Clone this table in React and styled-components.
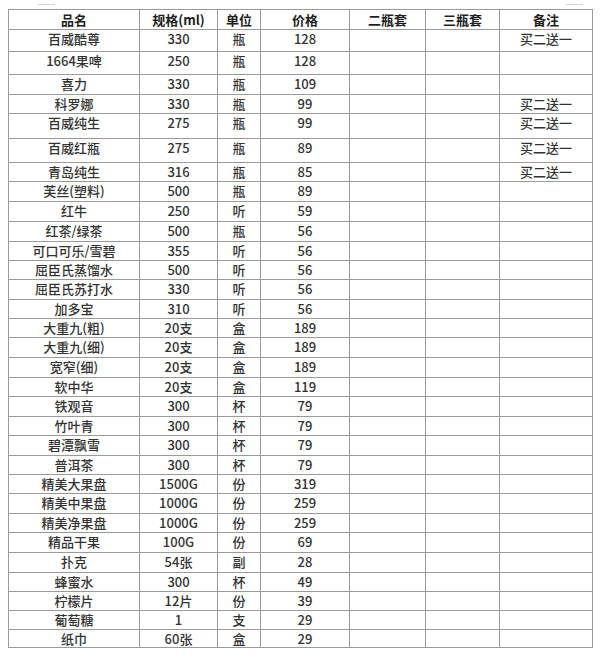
import React from "react";
import styled, { createGlobalStyle } from "styled-components";

const Global = createGlobalStyle`
  html, body { margin: 0; padding: 0; background: #ffffff; }
  body { font-family: "Noto Sans CJK SC", "Noto Sans", sans-serif; color: #2e2e2e; }
`;

const Page = styled.div`
  width: 600px;
  height: 658px;
  background: #fff;
  padding: 0 0 0 8px;
  box-sizing: border-box;
  overflow: hidden;
`;

const TopMarks = styled.div`
  height: 9px;
  display: flex;
  justify-content: space-between;
  align-items: flex-start;
  padding: 4px 17px 0 30px;
  box-sizing: border-box;
  width: 592px;
`;

const Mark = styled.span`
  display: block;
  width: 17px;
  height: 1px;
  background: #d4d4d4;
`;

const Table = styled.table`
  border-collapse: collapse;
  table-layout: fixed;
  width: 585px;
  font-size: 13px;
  border: 1px solid #8f8f8f;
`;

const Row = styled.tr`
  height: ${(p) => p.$h}px;
`;

const HeadCell = styled.th`
  border: 1px solid #9a9a9a;
  padding: 0;
  font-weight: 700;
  text-align: center;
  vertical-align: middle;
  line-height: 16px;
  height: ${(p) => p.$h - 1}px;
  color: #1e1e1e;
`;

const Cell = styled.td`
  border: 1px solid #9a9a9a;
  padding: 1px 0 0;
  text-align: center;
  vertical-align: top;
  line-height: 16px;
  font-weight: 500;
  height: ${(p) => p.$h - 2}px;
  color: #333;
  white-space: nowrap;
  box-sizing: border-box;
`;

const widths = [131, 78, 43, 89, 76, 74, 93];
const headers = ["品名", "规格(ml)", "单位", "价格", "二瓶套", "三瓶套", "备注"];

const rows = [
  ["百威酷尊", "330", "瓶", "128", "买二送一", 22],
  ["1664果啤", "250", "瓶", "128", "", 23],
  ["喜力", "330", "瓶", "109", "", 20],
  ["科罗娜", "330", "瓶", "99", "买二送一", 19],
  ["百威纯生", "275", "瓶", "99", "买二送一", 25],
  ["百威红瓶", "275", "瓶", "89", "买二送一", 24],
  ["青岛纯生", "316", "瓶", "85", "买二送一", 19],
  ["芙丝(塑料)", "500", "瓶", "89", "", 20],
  ["红牛", "250", "听", "59", "", 20],
  ["红茶/绿茶", "500", "瓶", "56", "", 20],
  ["可口可乐/雪碧", "355", "听", "56", "", 19],
  ["屈臣氏蒸馏水", "500", "听", "56", "", 19],
  ["屈臣氏苏打水", "330", "听", "56", "", 20],
  ["加多宝", "310", "听", "56", "", 19],
  ["大重九(粗)", "20支", "盒", "189", "", 19],
  ["大重九(细)", "20支", "盒", "189", "", 20],
  ["宽窄(细)", "20支", "盒", "189", "", 20],
  ["软中华", "20支", "盒", "119", "", 19],
  ["铁观音", "300", "杯", "79", "", 20],
  ["竹叶青", "300", "杯", "79", "", 19],
  ["碧潭飘雪", "300", "杯", "79", "", 20],
  ["普洱茶", "300", "杯", "79", "", 19],
  ["精美大果盘", "1500G", "份", "319", "", 19],
  ["精美中果盘", "1000G", "份", "259", "", 20],
  ["精美净果盘", "1000G", "份", "259", "", 19],
  ["精品干果", "100G", "份", "69", "", 20],
  ["扑克", "54张", "副", "28", "", 20],
  ["蜂蜜水", "300", "杯", "49", "", 19],
  ["柠檬片", "12片", "份", "39", "", 19],
  ["葡萄糖", "1", "支", "29", "", 19],
  ["纸巾", "60张", "盒", "29", "", 18],
];

export default function App() {
  return (
    <Page>
      <Global />
      <TopMarks>
        <Mark />
        <Mark />
      </TopMarks>
      <Table>
        <colgroup>
          {widths.map((w, i) => (
            <col key={i} style={{ width: w }} />
          ))}
        </colgroup>
        <thead>
          <Row $h={20}>
            {headers.map((h) => (
              <HeadCell key={h} $h={20}>{h}</HeadCell>
            ))}
          </Row>
        </thead>
        <tbody>
          {rows.map(([name, spec, unit, price, note, h]) => (
            <Row key={name} $h={h}>
              <Cell $h={h}>{name}</Cell>
              <Cell $h={h}>{spec}</Cell>
              <Cell $h={h}>{unit}</Cell>
              <Cell $h={h}>{price}</Cell>
              <Cell $h={h} />
              <Cell $h={h} />
              <Cell $h={h}>{note}</Cell>
            </Row>
          ))}
        </tbody>
      </Table>
    </Page>
  );
}
